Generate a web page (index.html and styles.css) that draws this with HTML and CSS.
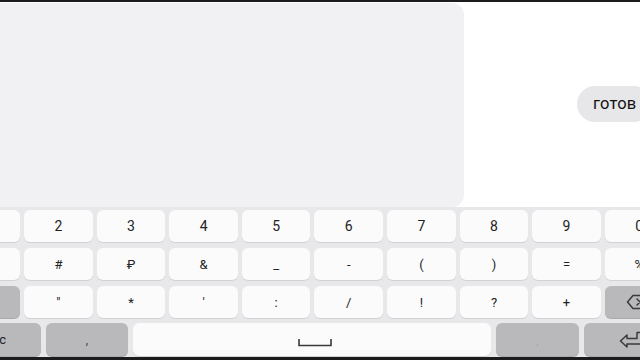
FILE: index.html
```html
<!DOCTYPE html>
<html>
<head>
<meta charset="utf-8">
<link rel="stylesheet" href="styles.css">
</head>
<body>
<div class="screen">
  <div class="topbar"></div>
  <div class="main">
    <div class="card"></div>
    <div class="side">
      <div class="bubble">готов</div>
    </div>
  </div>
  <div class="keyboard">
    <div class="row">
      <div class="key">1</div>
      <div class="key">2</div>
      <div class="key">3</div>
      <div class="key">4</div>
      <div class="key">5</div>
      <div class="key">6</div>
      <div class="key">7</div>
      <div class="key">8</div>
      <div class="key">9</div>
      <div class="key">0</div>
    </div>
    <div class="row">
      <div class="key sym">@</div>
      <div class="key sym">#</div>
      <div class="key sym">₽</div>
      <div class="key sym">&amp;</div>
      <div class="key sym">_</div>
      <div class="key sym">-</div>
      <div class="key sym">(</div>
      <div class="key sym">)</div>
      <div class="key sym">=</div>
      <div class="key sym">%</div>
    </div>
    <div class="row">
      <div class="key dark"></div>
      <div class="key sym">"</div>
      <div class="key sym">*</div>
      <div class="key sym">'</div>
      <div class="key sym">:</div>
      <div class="key sym">/</div>
      <div class="key sym">!</div>
      <div class="key sym">?</div>
      <div class="key sym">+</div>
      <div class="key dark icon-left">
        <svg width="24" height="16" viewBox="0 0 24 16"><path d="M7 1.5 H21 a1.5 1.5 0 0 1 1.5 1.5 V13 a1.5 1.5 0 0 1 -1.5 1.5 H7 L1.5 8 Z" fill="none" stroke="#3a3a3a" stroke-width="1.5" stroke-linejoin="round"/><path d="M11 5 L17 11 M17 5 L11 11" stroke="#3a3a3a" stroke-width="1.5" stroke-linecap="round"/></svg>
      </div>
    </div>
    <div class="row last">
      <div class="key dark abc">abc</div>
      <div class="key dark comma">,</div>
      <div class="key space">
        <svg width="34" height="9" viewBox="0 0 34 9"><path d="M1 1 V7.5 H33 V1" fill="none" stroke="#3a3a3a" stroke-width="1.6"/></svg>
      </div>
      <div class="key dark dot">.</div>
      <div class="key dark enter">
        <svg width="26" height="17" viewBox="0 0 26 17"><path d="M1.5 10 L8 4 V7.5 H18 V1.5 H24 V13 H8 V16 Z" fill="none" stroke="#3a3a3a" stroke-width="1.5" stroke-linejoin="round"/></svg>
      </div>
    </div>
  </div>
  <div class="bottombar"></div>
</div>
</body>
</html>
```
FILE: styles.css
```css
html, body {
  margin: 0;
  padding: 0;
  background: #ffffff;
}
.screen {
  width: 640px;
  height: 360px;
  overflow: hidden;
  display: flex;
  flex-direction: column;
  font-family: Roboto, "Noto Sans", sans-serif;
}
.topbar {
  height: 2px;
  background: #1c1c1c;
  flex: none;
}
.main {
  height: 205px;
  flex: none;
  display: flex;
  background: #ffffff;
}
.card {
  width: 464px;
  height: 204px;
  margin-top: 1px;
  background: #f1f0f3;
  border-radius: 0 12px 12px 0;
  flex: none;
}
.side {
  flex: 1;
  padding-left: 113px;
  padding-top: 84px;
  overflow: hidden;
}
.bubble {
  display: inline-block;
  height: 36px;
  line-height: 36px;
  padding: 0 16px;
  border-radius: 18px;
  background: #e7e6e9;
  color: #111111;
  font-size: 16.5px;
  letter-spacing: 0.2px;
  white-space: nowrap;
}
.keyboard {
  flex: none;
  height: 150px;
  background: #e8e8ea;
  padding-top: 3px;
  box-sizing: border-box;
  overflow: hidden;
}
.row {
  display: flex;
  gap: 4px;
  margin-left: -48.5px;
  margin-bottom: 6px;
  height: 32px;
}
.row.last {
  margin-top: -1px;
  height: 33px;
  gap: 5px;
  margin-left: -50px;
}
.key {
  flex: 0 0 68.6px;
  background: #fbfbfc;
  border-radius: 6px;
  box-shadow: 0 1px 0 #d2d2d5;
  display: flex;
  align-items: center;
  justify-content: center;
  font-size: 14px;
  color: #222222;
}
.key.sym {
  font-size: 13px;
}
.key.dark {
  background: #b9b9bc;
  box-shadow: 0 1px 0 #a9a9ac;
}
.icon-left {
  justify-content: flex-start;
  padding-left: 21px;
  box-sizing: border-box;
}
.abc {
  flex: 0 0 91px;
  font-size: 13px;
  color: #222222;
}
.comma {
  flex: 0 0 82px;
  font-size: 12px;
  color: #444444;
}
.space {
  flex: 0 0 358px;
  padding-top: 6px;
  box-sizing: border-box;
}
.space svg {
  margin-left: 5px;
}
.dot {
  flex: 0 0 83px;
  color: #9c9c9f;
  font-size: 12px;
  padding-top: 4px;
  box-sizing: border-box;
}
.enter {
  flex: 0 0 100px;
  justify-content: flex-start;
  padding-left: 35px;
  box-sizing: border-box;
}
.bottombar {
  flex: 1;
  background: #1c1c1c;
}
```
